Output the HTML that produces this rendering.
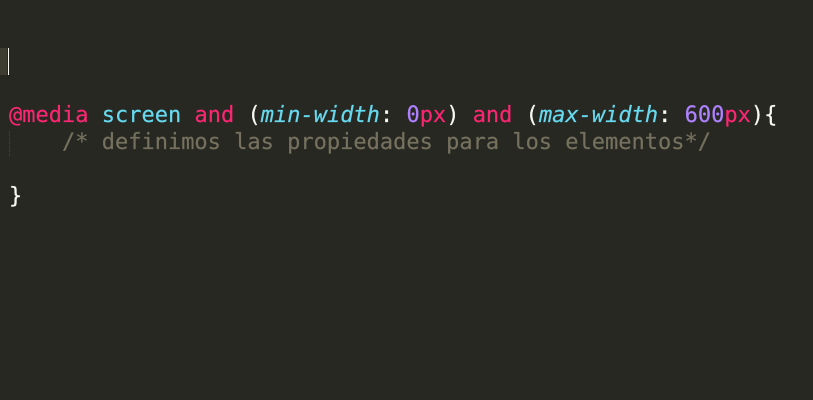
<!DOCTYPE html>
<html><head><style>
html,body{margin:0;padding:0;background:#272822;width:813px;height:400px;overflow:hidden}
.code{position:absolute;left:9px;top:48px;font-family:"DejaVu Sans Mono","Liberation Mono",monospace;font-size:22px;line-height:27px;white-space:pre;color:#f8f8f2;-webkit-text-stroke:0.2px}
.k{color:#f92672}.c{color:#66d9ef}.i{color:#66d9ef;font-style:italic}.n{color:#ae81ff}.cm{color:#75715e}
.cur{position:absolute;left:8px;top:48px;width:1px;height:27px;background:#f8f8f0}
.hl{position:absolute;left:0;top:48px;width:7px;height:27px;background:#3e3d32}
.guide{position:absolute;left:9px;top:131px;height:25px;border-left:1px dotted #464741}
</style></head><body>
<div class="hl"></div><div class="cur"></div><div class="guide"></div>
<div class="code">
<span></span>
<span class="k">@media</span> <span class="c">screen</span> <span class="k">and</span> (<span class="i">min-width</span>: <span class="n">0</span><span class="k">px</span>) <span class="k">and</span> (<span class="i">max-width</span>: <span class="n">600</span><span class="k">px</span>){
    <span class="cm">/* definimos las propiedades para los elementos*/</span>

}</div>
</body></html>
